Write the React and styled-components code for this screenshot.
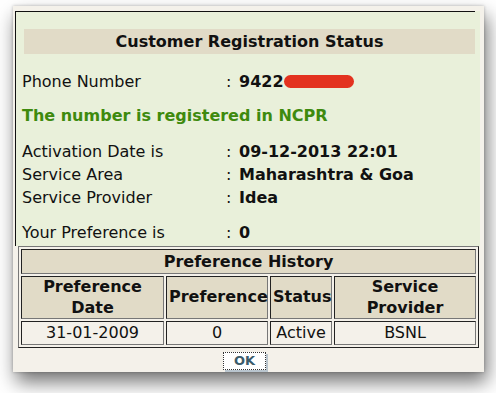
import React from "react";
import styled, { createGlobalStyle } from "styled-components";

const GlobalStyle = createGlobalStyle`
  html, body {
    margin: 0;
    padding: 0;
    background: #ffffff;
  }
  body {
    font-family: "DejaVu Sans", Verdana, sans-serif;
    font-size: 16px;
    color: #111;
  }
`;

const Page = styled.div`
  padding: 6px 0 0 13px;
  width: 496px;
  height: 393px;
  box-sizing: border-box;
  overflow: hidden;
`;

const Window = styled.div`
  width: 471px;
  height: 366px;
  box-sizing: border-box;
  padding: 5px 4px 0 2px;
  background: #f4f1ea;
  box-shadow: 3px 10px 18px rgba(0, 0, 0, 0.55), 0 0 3px rgba(0, 0, 0, 0.25);
  display: flex;
  flex-direction: column;
`;

const Panel = styled.div`
  background: #e9f0da;
  border-left: 1px solid #111;
  padding-right: 5px;
`;

const Inner = styled.div`
  border-top: 1px solid #111;
  padding: 17px 0 2px 6px;
`;

const Header = styled.div`
  margin-left: 2px;
  height: 25px;
  line-height: 25px;
  background: #e1dbc7;
  text-align: center;
  font-weight: bold;
`;

const Row = styled.div`
  display: grid;
  grid-template-columns: 204px 13px auto;
  line-height: 23px;
  margin-top: ${(p) => p.$gap || 0}px;
`;

const Value = styled.span`
  font-weight: bold;
  display: flex;
  align-items: center;
`;

const Notice = styled.div`
  margin-top: ${(p) => p.$gap}px;
  line-height: 23px;
  color: #3e8a0e;
  font-weight: bold;
`;

const Redact = styled.span`
  display: inline-block;
  width: 70px;
  height: 13px;
  border-radius: 7px;
  background: #e3321f;
`;

const Table = styled.table`
  margin: 0 0 0 3px;
  width: 459px;
  table-layout: fixed;
  border-collapse: separate;
  border-spacing: 2px;
  border: 1px solid;
  border-color: #777 #222 #222 #777;
  font-size: 16px;
`;

const Col = styled.col`
  width: ${(p) => p.$w}px;
`;

const Cell = styled.td`
  border: 1px solid;
  border-color: #222 #777 #777 #222;
  padding: 0 2px;
  text-align: center;
  background: ${(p) => (p.$head ? "#e1dbc7" : "#f4f1ea")};
  font-weight: ${(p) => (p.$head ? "bold" : "normal")};
  line-height: ${(p) => p.$lh}px;
`;

const Footer = styled.div`
  display: flex;
  justify-content: center;
  padding-top: 4px;
  padding-right: 6px;
`;

const OkButton = styled.button`
  width: 43px;
  height: 18px;
  padding: 0;
  background: #ffffff;
  border: 1px dotted #333;
  box-shadow: 2px 2px 0 #b9c5ce;
  color: #3b5b6a;
  font-family: "DejaVu Sans", Verdana, sans-serif;
  font-weight: bold;
  font-size: 13px;
  line-height: 16px;
`;

const details = [
  { label: "Activation Date is", value: "09-12-2013 22:01", gap: 13 },
  { label: "Service Area", value: "Maharashtra & Goa" },
  { label: "Service Provider", value: "Idea" },
  { label: "Your Preference is", value: "0", gap: 12 },
];

const history = [
  { date: "31-01-2009", pref: "0", status: "Active", provider: "BSNL" },
];

export default function App() {
  return (
    <>
      <GlobalStyle />
      <Page>
        <Window>
          <Panel>
            <Inner>
              <Header>Customer Registration Status</Header>
              <Row $gap={16}>
                <span>Phone Number</span>
                <span>:</span>
                <Value>
                  9422
                  <Redact />
                </Value>
              </Row>
              <Notice $gap={11}>The number is registered in NCPR</Notice>
              {details.map((d) => (
                <Row key={d.label} $gap={d.gap}>
                  <span>{d.label}</span>
                  <span>:</span>
                  <Value>{d.value}</Value>
                </Row>
              ))}
            </Inner>
          </Panel>
          <Table>
            <colgroup>
              <Col $w={143} />
              <Col $w={102} />
              <Col $w={62} />
              <Col $w={142} />
            </colgroup>
            <tbody>
              <tr>
                <Cell $head $lh={23} colSpan={4}>
                  Preference History
                </Cell>
              </tr>
              <tr>
                <Cell $head $lh={20.5}>
                  Preference
                  <br />
                  Date
                </Cell>
                <Cell $head $lh={20.5}>Preference</Cell>
                <Cell $head $lh={20.5}>Status</Cell>
                <Cell $head $lh={20.5}>
                  Service
                  <br />
                  Provider
                </Cell>
              </tr>
              {history.map((h) => (
                <tr key={h.date}>
                  <Cell $lh={22}>{h.date}</Cell>
                  <Cell $lh={22}>{h.pref}</Cell>
                  <Cell $lh={22}>{h.status}</Cell>
                  <Cell $lh={22}>{h.provider}</Cell>
                </tr>
              ))}
            </tbody>
          </Table>
          <Footer>
            <OkButton>OK</OkButton>
          </Footer>
        </Window>
      </Page>
    </>
  );
}
